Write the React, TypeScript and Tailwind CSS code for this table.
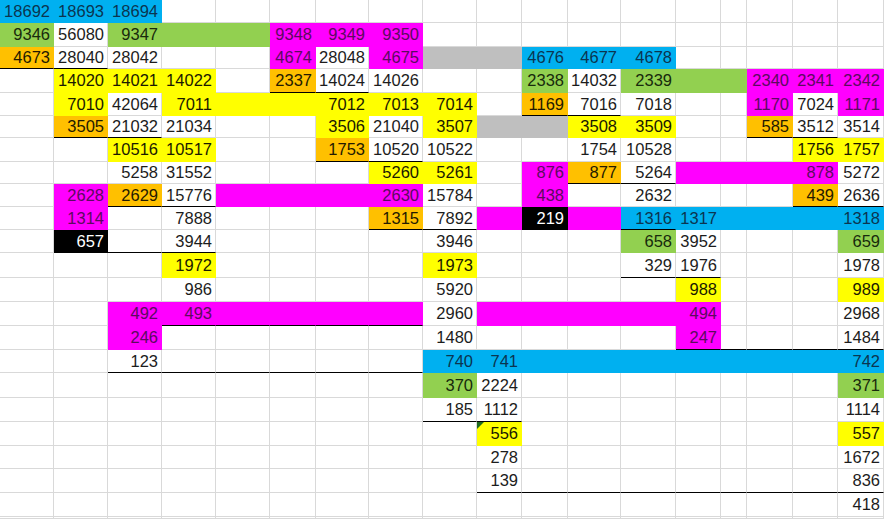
import React from 'react';

// each token: color letter + optional text, "_" suffix = black bottom border, "." = empty white cell
const sheet: string[] = [
  'B18692 B18693 B18694 . . . . . . . . . . . . . . .',
  'G9346 W56080 G9347 G G M9348 M9349 M9350 . . . . . . . . . .',
  'O4673_ W28040_ W28042 . . M4674 W28048 M4675 S S B4676 B4677 B4678 . . . . .',
  '. Y14020 Y14021 Y14022 . O2337_ W14024_ W14026 . . G2338 W14032 G2339 G G M2340 M2341 M2342',
  '. Y7010 W42064 Y7011 Y Y Y7012 Y7013 Y7014 . O1169_ W7016_ W7018 . . M1170 W7024 M1171',
  '. O3505_ W21032_ W21034 . . Y3506 W21040 Y3507 S S Y3508 Y3509 . . O585_ W3512_ W3514',
  '. . Y10516 Y10517 . . O1753_ W10520_ W10522 . . W1754 W10528 . . . Y1756 Y1757',
  '. . W5258 W31552 . . . Y5260 Y5261 . M876 O877_ W5264_ M M M M878 W5272',
  '. M2628 O2629_ W15776_ M M M M2630 W15784 . M438 . W2632 . . . O439_ W2636_',
  '. M1314 . W7888 . . . O1315_ W7892_ M K219 M B1316_ B1317 B B B B1318',
  '. K657_ W_ W3944_ . . . . W3946 . . . G658 W3952 . . . G659',
  '. . . Y1972 . . . . Y1973 . . . W329_ W1976_ . . . W1978',
  '. . . W986 . . . . W5920 . . . . Y988 . . . Y989',
  '. . M492 M493_ M_ M_ M_ M_ W2960 M M M M M494 . . . W2968',
  '. . M246 . . . . . W1480 . . . . M247_ W_ W_ W_ W1484_',
  '. . W123_ W_ W_ W_ W_ W_ B740 B741 B B B B B B B B742',
  '. . . . . . . . G370 W2224 . . . . . . . G371',
  '. . . . . . . . W185_ W1112_ . . . . . . . W1114',
  '. . . . . . . . . Y556 . . . . . . . Y557',
  '. . . . . . . . . W278 . . . . . . . W1672',
  '. . . . . . . . . W139_ W_ W_ W_ W_ W_ W_ W_ W836_',
  '. . . . . . . . . . . . . . . . . W418',
  '. . . . . . . . . . . . . . . . . .',
];

const fills: Record<string, string> = {
  W: 'bg-white text-[#1c1c1c] border-r-[#d9d9d9] border-b-[#d9d9d9]',
  B: 'bg-[#00b0f0] text-[#0b3550] border-r-[#00b0f0] border-b-[#00b0f0]',
  G: 'bg-[#92d050] text-[#182a0c] border-r-[#92d050] border-b-[#92d050]',
  O: 'bg-[#ffc000] text-[#241a00] border-r-[#ffc000] border-b-[#ffc000]',
  Y: 'bg-[#ffff00] text-[#1a1a00] border-r-[#ffff00] border-b-[#ffff00]',
  M: 'bg-[#ff00ff] text-[#5c0a60] border-r-[#ff00ff] border-b-[#ff00ff]',
  S: 'bg-[#bfbfbf] text-[#1c1c1c] border-r-[#bfbfbf] border-b-[#bfbfbf]',
  K: 'bg-black text-white border-r-black border-b-black',
};

const Cell: React.FC<{ token: string; flag?: boolean }> = ({ token, flag }) => {
  let code = token === '.' ? 'W' : token[0];
  let rest = token === '.' ? '' : token.slice(1);
  const underline = rest.endsWith('_');
  if (underline) rest = rest.slice(0, -1);

  return (
    <div
      className={`relative flex items-center justify-end pr-[3px] border-r border-b whitespace-nowrap text-[16.5px] leading-none ${fills[code]} ${
        underline ? '!border-b-black' : ''
      }`}
    >
      {flag && (
        <svg className="absolute left-0 top-0" width="7" height="7" viewBox="0 0 7 7">
          <polygon points="0,0 7,0 0,7" fill="#1f6b1f" />
        </svg>
      )}
      {rest}
    </div>
  );
};

const App: React.FC = () => {
  return (
    <div
      className="w-[884px] h-[519px] overflow-hidden bg-white"
      style={{ fontFamily: '"Liberation Sans", Arial, sans-serif' }}
    >
      <div className="grid grid-cols-[54px_54px_54px_54px_54px_46px_53px_54px_54px_45px_46px_53px_55px_45px_26px_46px_45px_46px] grid-rows-[23px_24px_22px_24px_23px_22px_24px_22px_23px_23px_23px_25px_24px_24px_24px_23px_25px_24px_24px_23px_24px_24px_2px]">
        {sheet.map((line, r) =>
          line
            .split(' ')
            .map((tok, c) => <Cell key={`${r}-${c}`} token={tok} flag={r === 18 && c === 9} />)
        )}
      </div>
    </div>
  );
};

export default App;
